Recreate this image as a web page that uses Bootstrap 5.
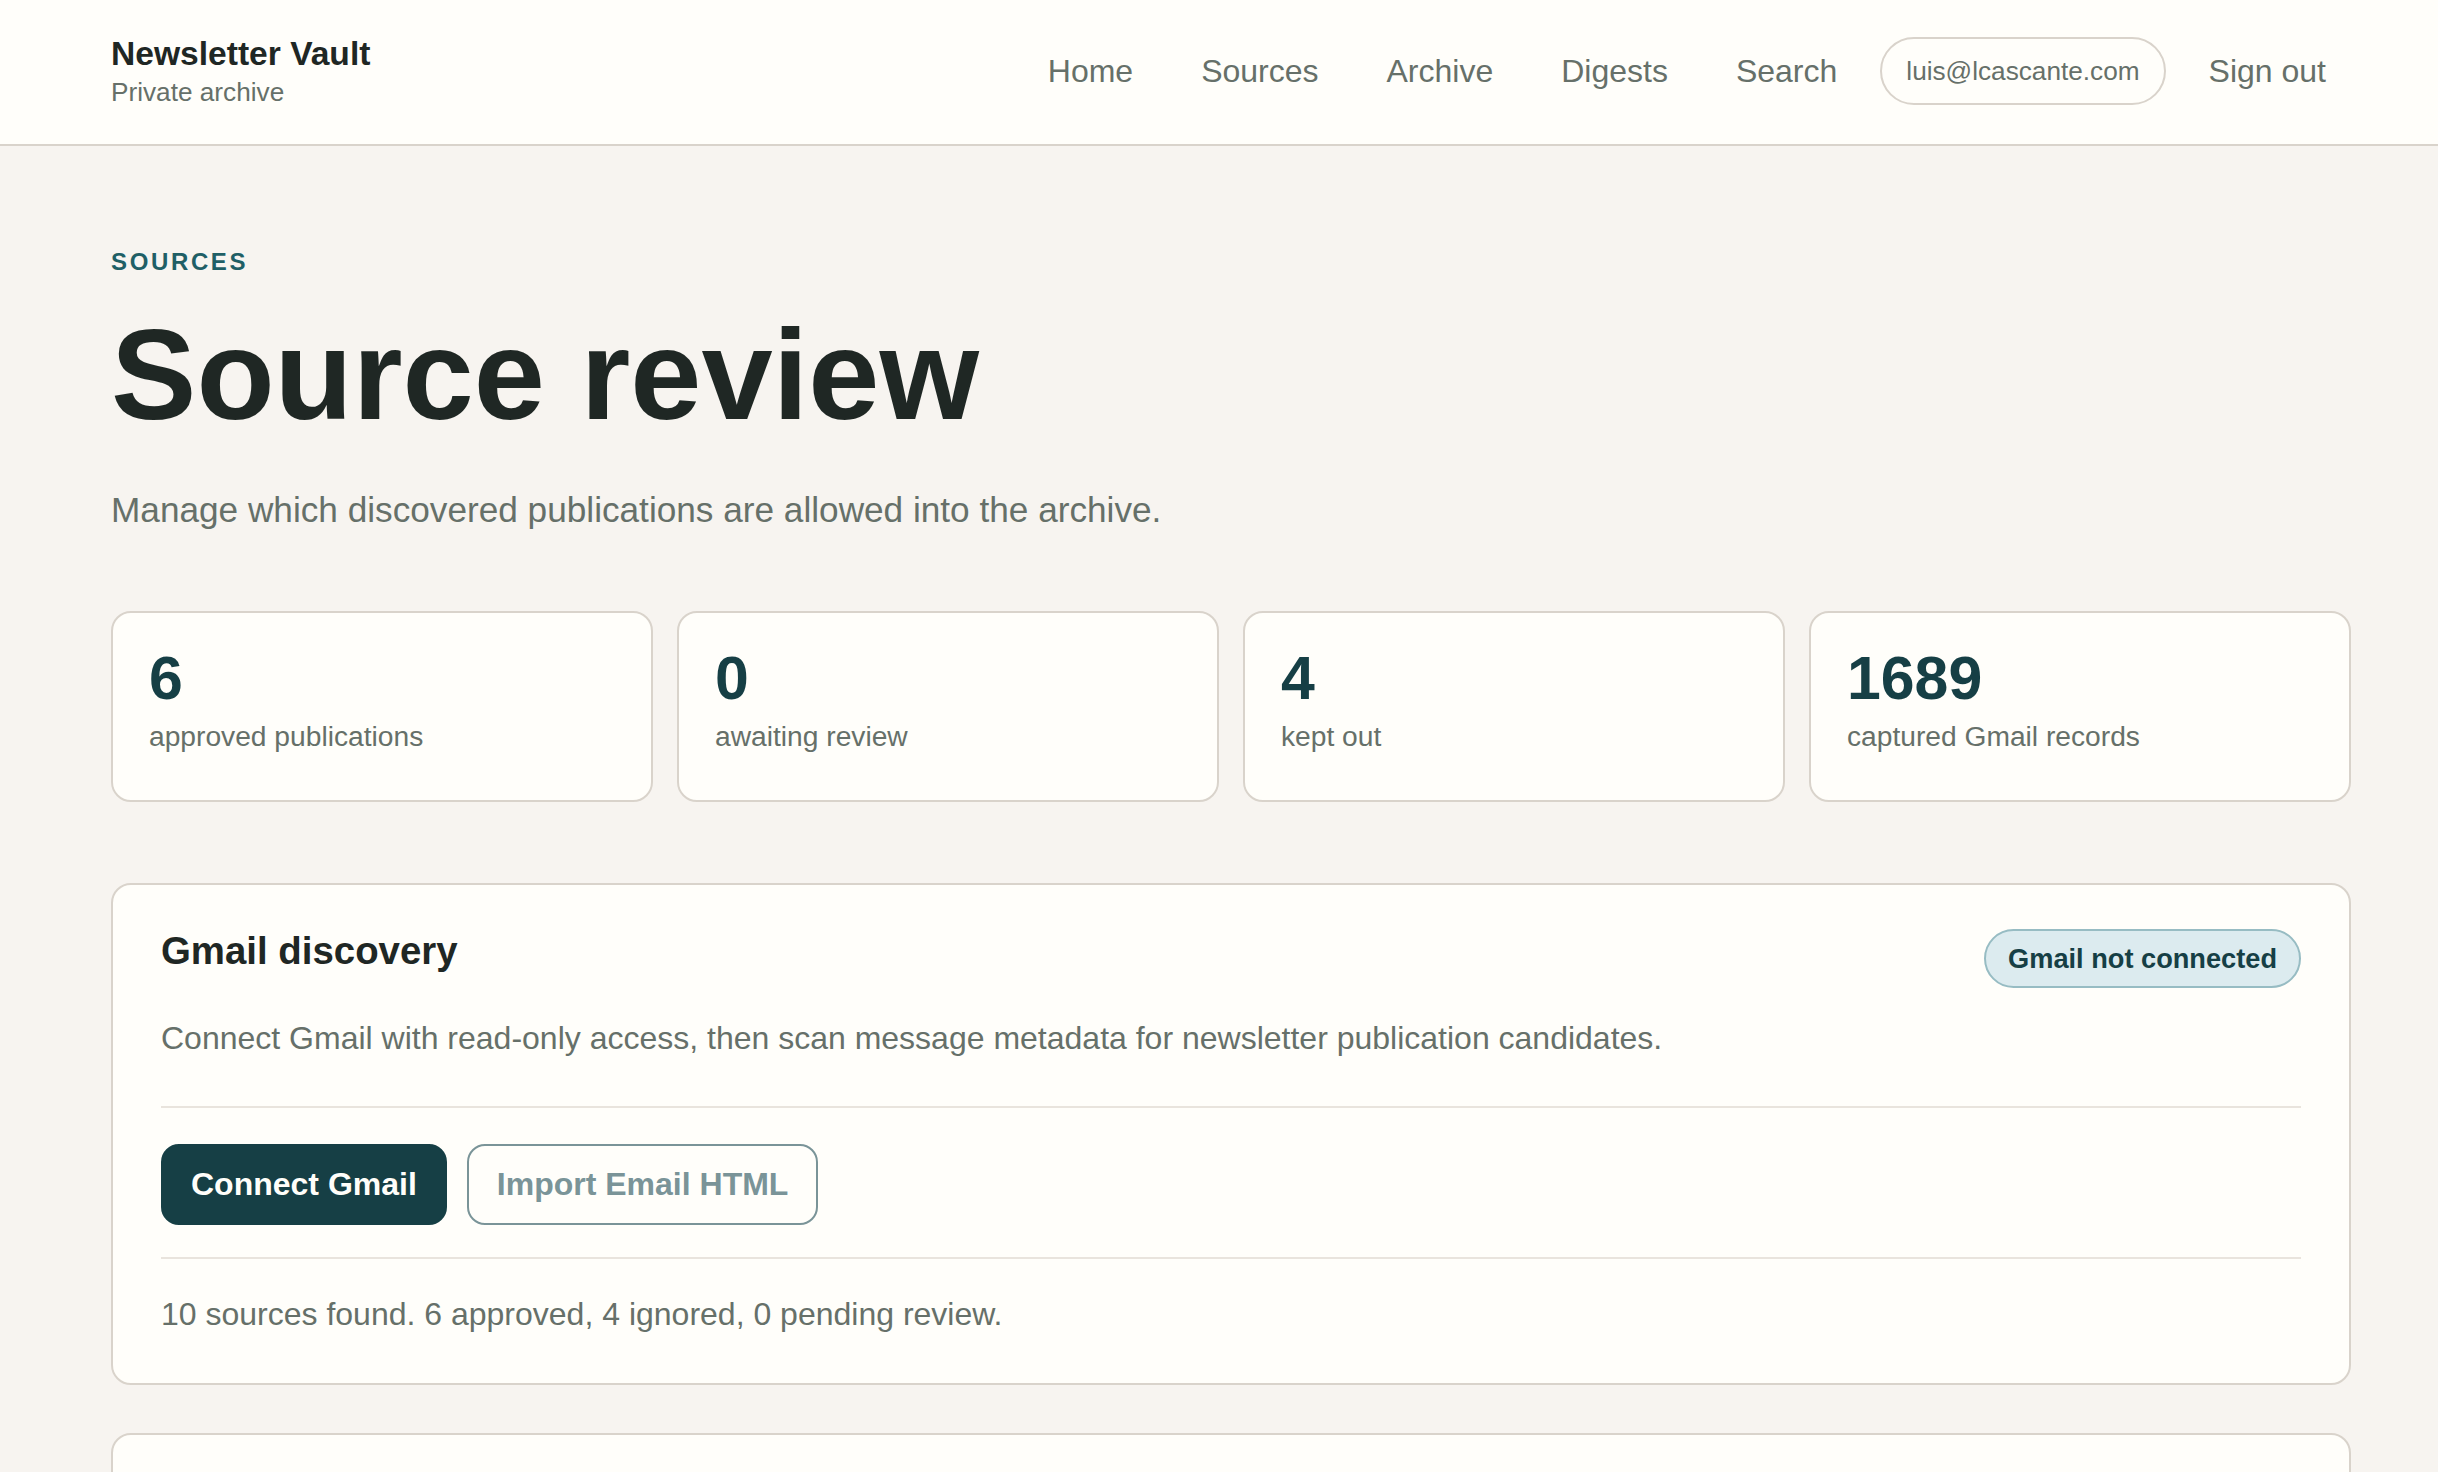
<!DOCTYPE html>
<html lang="en">
<head>
    <meta charset="UTF-8">
    <meta name="viewport" content="width=device-width, initial-scale=1.0">
    <title>Source review - Newsletter Vault</title>
    <link href="https://cdn.jsdelivr.net/npm/bootstrap@5.3.0/dist/css/bootstrap.min.css" rel="stylesheet">
    <style>
        html, body { height: 100vh; overflow: hidden; }
        body {
            font-family: "Liberation Sans", Arial, sans-serif;
            font-size: 32px;
            background: #f7f4f0;
            color: #1f2724;
        }
        .site-header {
            background: #fffefa;
            border-bottom: 2px solid #d9d3cb;
            height: 146px;
            padding: 0 86px 0 111px;
        }
        .brand-name { font-size: 33.6px; font-weight: 700; line-height: 40px; color: #1f2724; }
        .brand-sub { font-size: 26.2px; line-height: 36px; color: #667069; }
        .top-nav { margin-bottom: 3px; }
        .top-link { font-size: 32px; line-height: 48px; padding: 0 26px; color: #667069; text-decoration: none; }
        .user-pill {
            font-size: 26.2px;
            line-height: 40px;
            margin: 0 1px;
            padding: 12px 24px;
            border: 2px solid #d9d3cb;
            border-radius: 34px;
            color: #667069;
        }
        .page-wrap { padding: 98px 87px 0 111px; }
        .eyebrow {
            font-size: 24px;
            font-weight: 700;
            line-height: 36px;
            letter-spacing: .11em;
            text-transform: uppercase;
            color: #1f5f66;
            margin-bottom: 25px;
        }
        .page-title { font-size: 128px; font-weight: 700; line-height: 140px; margin-bottom: 39px; color: #1f2724; }
        .page-lead { font-size: 35.2px; line-height: 52.8px; color: #667069; margin-bottom: 74px; }
        .stat-grid { display: grid; grid-template-columns: repeat(4, 1fr); gap: 24px; margin-bottom: 81px; }
        .stat-box {
            background: #fffefa;
            border: 2px solid #d9d3cb;
            border-radius: 20px;
            padding: 30.5px 36px 43px;
        }
        .stat-num { font-size: 60.8px; font-weight: 700; line-height: 70px; margin-bottom: 1.5px; color: #163f45; }
        .stat-label { font-size: 28.2px; line-height: 42px; color: #667069; }
        .panel-box {
            background: #fffefa;
            border: 2px solid #d9d3cb;
            border-radius: 20px;
            padding: 40px 48px 45px;
            margin-bottom: 48px;
        }
        .panel-next { min-height: 200px; }
        .panel-title { font-size: 38.4px; font-weight: 700; line-height: 50px; margin: 0; padding-top: 1px; color: #1f2724; }
        .status-pill {
            font-size: 27.2px;
            font-weight: 700;
            line-height: 41px;
            margin-top: 4px;
            padding: 7px 22px;
            border: 2px solid #97bcc3;
            border-radius: 30px;
            background: #dcebef;
            color: #163f45;
        }
        .panel-text { font-size: 32px; line-height: 48px; color: #667069; margin: 0; }
        .panel-desc { margin-top: 26px; }
        .rule-top { border-top: 2px solid #e9e4dd; margin: 44px 0 36px; }
        .rule-bottom { border-top: 2px solid #e9e4dd; margin: 32px 0 31px; }
        .btn-row { gap: 20px; }
        .btn-vault {
            font-size: 32px;
            font-weight: 700;
            line-height: 48px;
            padding: 14.5px 28px;
            border: 2px solid #163f45;
            border-radius: 18px;
        }
        .btn-fill { background: #163f45; color: #fffefa; }
        .btn-line { background: #fffefa; border-color: #7a9498; color: #7a9498; }
    </style>
</head>
<body>
    <header class="site-header d-flex align-items-center justify-content-between">
        <div>
            <div class="brand-name">Newsletter Vault</div>
            <div class="brand-sub">Private archive</div>
        </div>
        <nav class="top-nav d-flex align-items-center gap-3">
            <a class="top-link" href="#">Home</a>
            <a class="top-link" href="#">Sources</a>
            <a class="top-link" href="#">Archive</a>
            <a class="top-link" href="#">Digests</a>
            <a class="top-link" href="#">Search</a>
            <span class="user-pill">luis@lcascante.com</span>
            <a class="top-link" href="#">Sign out</a>
        </nav>
    </header>

    <main class="page-wrap">
        <div class="eyebrow">Sources</div>
        <h1 class="page-title">Source review</h1>
        <p class="page-lead">Manage which discovered publications are allowed into the archive.</p>

        <div class="stat-grid">
            <div class="stat-box"><div class="stat-num">6</div><div class="stat-label">approved publications</div></div>
            <div class="stat-box"><div class="stat-num">0</div><div class="stat-label">awaiting review</div></div>
            <div class="stat-box"><div class="stat-num">4</div><div class="stat-label">kept out</div></div>
            <div class="stat-box"><div class="stat-num">1689</div><div class="stat-label">captured Gmail records</div></div>
        </div>

        <section class="panel-box">
            <div class="d-flex justify-content-between align-items-start">
                <h2 class="panel-title">Gmail discovery</h2>
                <span class="status-pill">Gmail not connected</span>
            </div>
            <p class="panel-text panel-desc">Connect Gmail with read-only access, then scan message metadata for newsletter publication candidates.</p>
            <div class="rule-top"></div>
            <div class="btn-row d-flex">
                <button type="button" class="btn btn-vault btn-fill">Connect Gmail</button>
                <button type="button" class="btn btn-vault btn-line">Import Email HTML</button>
            </div>
            <div class="rule-bottom"></div>
            <p class="panel-text">10 sources found. 6 approved, 4 ignored, 0 pending review.</p>
        </section>

        <section class="panel-box panel-next"></section>
    </main>
</body>
</html>
